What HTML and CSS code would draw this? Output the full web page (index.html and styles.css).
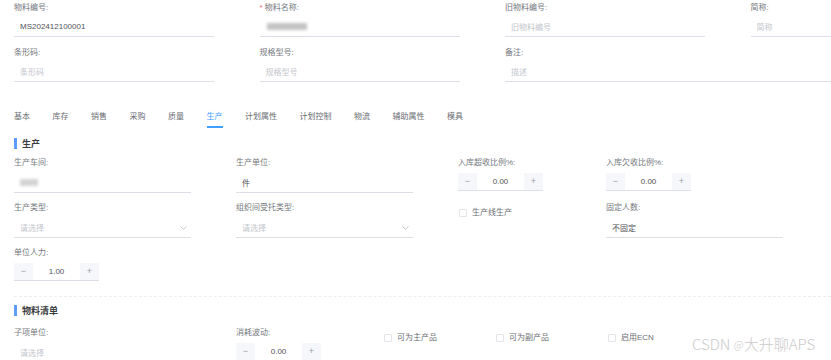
FILE: index.html
```html
<!DOCTYPE html>
<html lang="zh-CN">
<head>
    <meta charset="UTF-8">
    <title>物料编辑</title>
    <link rel="stylesheet" href="styles.css">
</head>
<body>
    <div class="page">
        <!-- 基本信息 -->
        <div class="form-grid top-grid">
            <div class="form-item">
                <div class="label">物料编号:</div>
                <div class="input"><span class="value">MS202412100001</span></div>
            </div>
            <div class="form-item">
                <div class="label"><span class="required">*</span> 物料名称:</div>
                <div class="input"><span class="blurred wide"></span></div>
            </div>
            <div class="form-item">
                <div class="label">旧物料编号:</div>
                <div class="input"><span class="placeholder">旧物料编号</span></div>
            </div>
            <div class="form-item">
                <div class="label">简称:</div>
                <div class="input"><span class="placeholder">简称</span></div>
            </div>
            <div class="form-item">
                <div class="label">条形码:</div>
                <div class="input"><span class="placeholder">条形码</span></div>
            </div>
            <div class="form-item">
                <div class="label">规格型号:</div>
                <div class="input"><span class="placeholder">规格型号</span></div>
            </div>
            <div class="form-item span-2">
                <div class="label">备注:</div>
                <div class="input"><span class="placeholder">描述</span></div>
            </div>
        </div>

        <!-- 标签页 -->
        <div class="tabs">
            <span class="tab">基本</span>
            <span class="tab">库存</span>
            <span class="tab">销售</span>
            <span class="tab">采购</span>
            <span class="tab">质量</span>
            <span class="tab active">生产</span>
            <span class="tab">计划属性</span>
            <span class="tab">计划控制</span>
            <span class="tab">物流</span>
            <span class="tab">辅助属性</span>
            <span class="tab">模具</span>
        </div>

        <!-- 生产 -->
        <div class="section">
            <div class="section-title">生产</div>
            <div class="form-grid prod-grid">
                <div class="form-item">
                    <div class="label">生产车间:</div>
                    <div class="input w177"><span class="blurred small"></span></div>
                </div>
                <div class="form-item">
                    <div class="label">生产单位:</div>
                    <div class="input w177"><span class="value">件</span></div>
                </div>
                <div class="form-item">
                    <div class="label">入库超收比例%:</div>
                    <div class="number"><span class="btn">−</span><span class="num">0.00</span><span class="btn">+</span></div>
                </div>
                <div class="form-item">
                    <div class="label">入库欠收比例%:</div>
                    <div class="number"><span class="btn">−</span><span class="num">0.00</span><span class="btn">+</span></div>
                </div>

                <div class="form-item">
                    <div class="label">生产类型:</div>
                    <div class="input w177 select"><span class="placeholder">请选择</span>
                        <svg class="arrow" width="7" height="4" viewBox="0 0 7 4"><path d="M0.5 0.5 L3.5 3.3 L6.5 0.5" fill="none" stroke="#b4b8bf" stroke-width="0.8"/></svg>
                    </div>
                </div>
                <div class="form-item">
                    <div class="label">组织间受托类型:</div>
                    <div class="input w177 select"><span class="placeholder">请选择</span>
                        <svg class="arrow" width="7" height="4" viewBox="0 0 7 4"><path d="M0.5 0.5 L3.5 3.3 L6.5 0.5" fill="none" stroke="#b4b8bf" stroke-width="0.8"/></svg>
                    </div>
                </div>
                <div class="form-item check-item">
                    <span class="checkbox"></span><span class="check-text">生产线生产</span>
                </div>
                <div class="form-item">
                    <div class="label">固定人数:</div>
                    <div class="input w177"><span class="value">不固定</span></div>
                </div>

                <div class="form-item">
                    <div class="label">单位人力:</div>
                    <div class="number"><span class="btn">−</span><span class="num">1.00</span><span class="btn">+</span></div>
                </div>
            </div>
        </div>

        <div class="divider"></div>

        <!-- 物料清单 -->
        <div class="section bom">
            <div class="section-title">物料清单</div>
            <div class="form-grid bom-grid">
                <div class="form-item">
                    <div class="label">子项单位:</div>
                    <div class="input w177 plain"><span class="placeholder">请选择</span></div>
                </div>
                <div class="form-item">
                    <div class="label">消耗波动:</div>
                    <div class="number"><span class="btn">−</span><span class="num">0.00</span><span class="btn">+</span></div>
                </div>
                <div class="form-item check-item">
                    <span class="checkbox"></span><span class="check-text">可为主产品</span>
                </div>
                <div class="form-item check-item">
                    <span class="checkbox"></span><span class="check-text">可为副产品</span>
                </div>
                <div class="form-item check-item">
                    <span class="checkbox"></span><span class="check-text">启用ECN</span>
                </div>
            </div>
        </div>

        <div class="watermark">CSDN <span class="at">@</span>大升聊APS</div>
    </div>
</body>
</html>
```

FILE: styles.css
```css
body {
    margin: 0;
    width: 831px;
    height: 360px;
    overflow: hidden;
    background: #fff;
    font-family: "Liberation Sans", "Noto Sans CJK SC", sans-serif;
    font-size: 8px;
    color: #75787e;
}

.page {
    position: relative;
    padding: 3px 0 0 14px;
    height: 357px;
}

.form-grid {
    display: grid;
    align-items: start;
}

.top-grid {
    grid-template-columns: 200px 200px 200px 200px;
    column-gap: 45.5px;
}

.prod-grid {
    grid-template-columns: 222px 222px 148px 200px;
}

.bom-grid {
    grid-template-columns: 222px 147px 112px 112px 120px;
}

.form-item {
    margin-bottom: 11px;
}

.prod-grid .form-item,
.bom-grid .form-item {
    margin-bottom: 10px;
}

.span-2 {
    grid-column: span 2;
}

.label {
    line-height: 10px;
    height: 10px;
    margin-bottom: 4px;
    white-space: nowrap;
}

.prod-grid .label,
.bom-grid .label {
    margin-bottom: 5px;
}

.required {
    color: #f56c6c;
}

.input {
    height: 19px;
    border-bottom: 1px solid #dcdfe6;
    padding-left: 6px;
    display: flex;
    align-items: center;
    position: relative;
}

.input.plain {
    border-bottom-color: transparent;
}

.w177 {
    width: 171px;
}

.value {
    color: #505256;
}

.placeholder {
    color: #c3c6cc;
}

.blurred {
    display: inline-block;
    height: 7px;
    background: #c4c4c4;
    filter: blur(1.6px);
}

.blurred.wide {
    width: 40px;
    margin-left: 1px;
}

.blurred.small {
    width: 18px;
    background: #d4d4d4;
}

.select .arrow {
    position: absolute;
    right: 4px;
    top: 8px;
}

.number {
    display: flex;
    width: 85px;
    height: 17px;
    margin-top: 2px;
    border-bottom: 1px solid #dcdfe6;
    line-height: 17px;
}

.number .btn {
    width: 19px;
    text-align: center;
    background: #f5f7fa;
    color: #9a9ea6;
    font-size: 9px;
}

.number .num {
    flex: 1;
    text-align: center;
    color: #505256;
}

.tabs {
    display: flex;
    gap: 22.5px;
    padding-top: 18px;
    line-height: 12px;
}

.tab {
    padding-bottom: 3px;
    border-bottom: 2px solid transparent;
    color: #6a6d73;
}

.tab.active {
    color: #409eff;
    border-bottom-color: #409eff;
}

.section-title {
    margin: 10px 0 9px;
    line-height: 10px;
    font-size: 9px;
    font-weight: bold;
    color: #3a3c40;
    display: flex;
    align-items: center;
}

.section-title::before {
    content: "";
    width: 3px;
    height: 11px;
    background: #5d9cf8;
    margin-right: 5px;
}

.bom .section-title {
    margin: 8px 0 12px;
}

.check-item {
    display: flex;
    align-items: center;
    padding-top: 5px;
    line-height: 10px;
}

.checkbox {
    width: 6px;
    height: 6px;
    border: 1px solid #e2e4e8;
    border-radius: 1px;
    margin: 0 5px 0 1px;
}

.check-text {
    color: #6a6d73;
}

.divider {
    border-top: 1px dashed #eceef2;
    margin-top: 5px;
}

.watermark {
    position: absolute;
    left: 692px;
    top: 334px;
    font-family: "Noto Sans CJK SC", sans-serif;
    font-size: 15px;
    font-weight: 300;
    color: #cbcbcb;
    white-space: nowrap;
    line-height: 20px;
}

.watermark .at {
    font-size: 11px;
    vertical-align: 1px;
}
```
